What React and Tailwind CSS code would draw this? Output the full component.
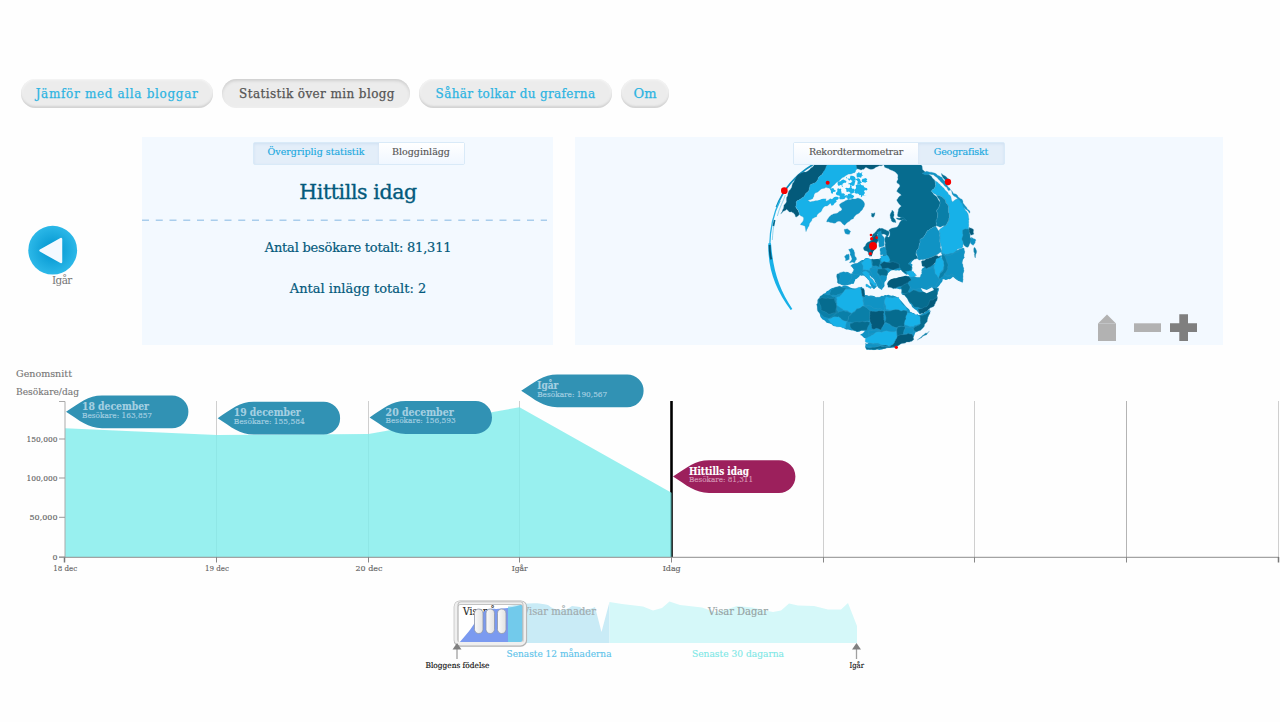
import React from "react";

const SERIF = "font-['DejaVu_Serif','Liberation_Serif',serif]";

/* ---------- navigation ---------- */

const NAV = [
  { text: "Jämför med alla bloggar", box: "w-[192px] tracking-[0.67px]", active: false },
  { text: "Statistik över min blogg", box: "w-[188px] tracking-[0.4px]", active: true },
  { text: "Såhär tolkar du graferna", box: "w-[193px] tracking-[0.34px]", active: false },
  { text: "Om", box: "w-[48px] text-[13px]", active: false },
];

function Nav() {
  return (
    <nav className="flex gap-[9px] pt-[79px] pl-[21px]">
      {NAV.map((n) => (
        <button
          key={n.text}
          className={
            "flex h-[29px] items-center justify-center rounded-full bg-[#ececec] text-[12px] whitespace-nowrap [-webkit-text-stroke:0.25px] " +
            n.box +
            (n.active
              ? " pl-[2px] text-[#555] shadow-[inset_0_2px_3px_#cfcfcf,inset_0_0_2px_#f8f8f8]"
              : " text-[#2db4e2] shadow-[inset_0_-2px_2px_#d2d2d2,inset_0_0_2px_1px_#f6f6f6]")
          }
        >
          {n.text}
        </button>
      ))}
    </nav>
  );
}

function Tabs({ items }) {
  return (
    <div className="relative z-10 flex h-[23px] w-[212px] rounded-[2px] border border-[#d9eaf8] bg-[#f6faff] text-[9.5px] [-webkit-text-stroke:0.15px]">
      {items.map((t) => (
        <div
          key={t.text}
          className={
            "flex items-center justify-center pb-[3px] whitespace-nowrap " +
            t.box +
            (t.active
              ? " bg-[#e3eef9] text-[#18a8df] shadow-[inset_0_1px_3px_#cfe0f2]"
              : " bg-linear-to-b from-white to-[#f0f7ff] text-[#555]")
          }
        >
          {t.text}
        </div>
      ))}
    </div>
  );
}

/* ---------- globe ---------- */

function noise(a, b) {
  const s = Math.sin(a * 12.9898 + b * 78.233) * 43758.5453;
  return s - Math.floor(s) - 0.5;
}

/* Splits every edge and pushes the midpoints sideways, so borders look drawn by hand. */
function roughen(points, depth, amount) {
  let pts = points;
  for (let d = 0; d < depth; d++) {
    const next = [];
    pts.forEach((p, i) => {
      const q = pts[(i + 1) % pts.length];
      next.push(p);
      const k = noise(p[0] + q[0], p[1] + q[1]) * amount;
      const len = Math.hypot(q[0] - p[0], q[1] - p[1]);
      if (len < 6) return;
      const s = p[0] + p[1] * 2 < q[0] + q[1] * 2 ? 1 : -1;
      const dx = (q[0] - p[0]) * s;
      const dy = (q[1] - p[1]) * s;
      next.push([(p[0] + q[0]) / 2 - dy * k, (p[1] + q[1]) / 2 + dx * k]);
    });
    pts = next;
  }
  return pts.map((p) => p[0].toFixed(1) + "," + p[1].toFixed(1)).join(" ");
}

const parse = (s) => s.split(" ").map((p) => p.split(",").map(Number));

const D = "#045a7a";
const T = "#066c8f";
const M = "#0a7fa8";
const B = "#1093c4";
const L = "#17b1e8";
const W = "#f3f9ff";

const LAND = [
  [B, "172,532 180,505 215,475 250,468 305,470 315,495 360,505 375,495 412,502 425,510 450,545 475,555 510,538 505,560 470,600 460,622 410,650 350,658 318,658 315,648 335,635 300,615 315,602 270,600 225,588 200,578 180,555"],
  [B, "272,406 290,402 302,392 318,384 336,388 360,385 376,366 420,366 460,390 455,430 440,434 425,420 400,420 384,430 380,448 374,456 366,480 356,474 340,446 328,436 344,462 350,470 342,478 330,462 316,440 300,436 286,448 280,462 262,466 240,462 236,434 262,426 280,432 282,420"],
  [B, "380,462 392,448 445,438 486,442 486,416 550,376 608,356 608,456 580,440 548,448 530,474 536,476 528,504 500,545 478,552 454,524 424,492 430,478 398,474"],
  [D, "165,100 210,100 185,135 150,165 132,200 110,213 107,230 118,252 108,262 100,248 88,246 80,238 62,252 70,236 78,218 80,202 84,190 98,160 125,128"],
  [L, "205,100 288,100 292,116 284,128 266,132 250,142 238,152 228,158 222,165 213,176 198,172 180,180 163,192 158,206 143,212 150,216 172,212 186,203 195,200 198,214 212,206 224,212 208,222 192,230 182,246 170,260 156,266 150,278 144,292 138,305 135,288 121,284 131,264 118,254 107,230 110,213 132,200 150,165 185,135"],
  [W, "176,192 190,182 198,176 206,182 204,192 215,198 202,204 190,206 170,210 160,202"],
  [D, "286,100 375,100 352,110 335,118 318,112 304,120 291,116"],
  [L, "233,157 246,150 258,158 250,172 236,168", 0.9],
  [L, "258,140 280,138 287,146 268,152", 0.9],
  [L, "264,156 280,152 284,162 270,166", 0.9],
  [L, "290,130 308,126 314,138 296,142", 0.9],
  [L, "255,175 270,166 282,176 290,186 278,190 262,186", 0.9],
  [L, "284,152 300,148 306,158 292,164", 0.9],
  [L, "288,170 306,166 320,174 312,184 320,196 306,202 296,192 284,184", 0.9],
  [L, "232,176 244,178 250,190 262,196 254,206 240,198 228,188", 0.9],
  [L, "210,180 222,176 226,186 216,192", 0.9],
  [L, "308,146 322,148 316,158 306,156", 0.9],
  [L, "264,192 280,196 274,206 262,204", 0.9],
  [L, "222,202 236,206 226,218 212,222", 0.9],
  [B, "200,276 208,260 220,252 236,246 246,238 238,224 256,212 278,206 294,204 306,210 314,222 308,238 288,254 280,266 264,276 254,286 240,274 222,280"],
  [B, "253,298 262,296 272,304 268,313 255,310"],
  [T, "372,100 482,100 488,120 510,136 524,150 527,168 514,184 530,200 540,216 530,240 532,262 528,290 502,302 480,328 478,345 468,368 474,386 454,392 444,402 456,412 450,424 436,430 420,414 402,408 390,395 374,388 370,364 376,340 378,318 386,322 390,308 386,300 412,290 420,276 430,268 414,260 416,236 424,228 410,210 424,196 410,184 420,168 410,156 414,138 406,126 388,118 374,112"],
  [T, "396,240 390,256 394,272 408,278 400,262 402,246"],
  [T, "408,264 428,262 440,272 420,270"],
  [T, "334,250 345,248 340,262 334,258"],
  [B, "486,130 500,124 520,128 546,142 560,158 572,180 566,182 552,166 540,152 520,134 500,134"],
  [T, "545,130 560,142 568,152 558,152 548,142"],
  [L, "526,152 548,172 562,186 578,216 592,206 606,212 612,232 622,248 626,280 628,300 618,330 608,352 580,370 545,372 541,340 536,302 556,288 568,262 566,230 552,206 530,196 514,184 527,168"],
  [M, "530,196 552,206 566,230 568,262 556,288 540,292 528,286 532,262 530,240 540,216"],
  [B, "478,345 480,328 502,302 528,290 536,302 541,340 545,366 526,376 500,386 476,390 468,368"],
  [B, "548,378 580,370 608,355 614,365 606,400 609,430 608,456 592,448 580,440 560,438 548,424 556,404"],
  [M, "608,300 626,296 630,318 634,332 624,352 614,348 606,330"],
  [D, "628,292 640,298 642,312 632,316"],
  [B, "634,322 648,330 640,346 632,340"],
  [M, "643,352 650,364 646,384 644,370"],
  [B, "572,180 592,196 606,208 616,228 630,244 628,250 610,230 600,212"],
  [B, "545,366 560,376 580,370 612,354 614,365 606,400 609,430 607,458 590,448 574,432 560,438 548,424"],
  [D, "484,394 500,386 526,376 546,378 534,392 520,404 500,416 486,408"],
  [M, "546,374 556,380 564,402 562,420 548,440 534,446 548,424 550,400"],
  [L, "528,388 544,376 551,394 548,420 536,444 524,432 522,408"],
  [B, "444,440 462,438 480,442 486,424 502,416 520,410 526,432 540,450 528,472 514,468 498,478 476,476 456,478 444,462"],
  [D, "382,462 392,448 410,444 424,438 446,440 454,450 442,462 426,468 400,476 384,472"],
  [T, "422,470 442,458 450,470 444,484 456,494 440,492 424,488"],
  [L, "436,424 462,426 470,436 450,440"],
  [T, "426,492 446,488 460,480 482,486 500,484 512,476 536,474 530,504 514,524 500,538 474,532 462,532 446,514"],
  [D, "474,536 500,530 510,510 532,500 520,530 500,544 480,552"],
  [T, "310,354 318,342 330,334 336,320 346,306 358,294 372,298 388,306 382,320 372,312 352,312 342,330 338,356 330,380 324,366 314,362"],
  [D, "338,322 350,312 356,330 348,352 338,380 328,376 332,350"],
  [B, "353,306 364,302 374,328 372,348 358,352 354,330"],
  [B, "360,356 374,350 380,374 362,376"],
  [B, "266,358 276,354 284,368 290,388 284,398 268,398 276,386 270,374"],
  [B, "254,378 266,372 268,388 256,392"],
  [B, "240,428 262,426 276,436 268,456 254,466 236,462 232,444"],
  [M, "231,432 239,428 238,460 232,458"],
  [B, "272,408 290,400 306,396 312,412 302,428 306,434 290,434 276,430 282,418"],
  [L, "304,398 318,386 332,388 336,408 328,422 310,420"],
  [T, "334,388 352,384 362,394 358,412 338,408"],
  [L, "362,378 380,374 390,390 378,402 362,394"],
  [D, "360,404 372,394 394,396 418,402 420,414 400,420 384,414 366,418"],
  [T, "352,418 372,416 384,424 380,438 360,438 350,428"],
  [L, "306,428 318,422 328,430 332,444 348,460 350,470 340,466 326,450 314,438"],
  [B, "330,414 350,412 352,430 360,444 368,460 364,478 354,466 342,444 334,430"],
  [L, "318,462 338,470 332,476 318,470"],
  [M, "212,482 240,468 258,474 256,490 230,496 210,498"],
  [M, "174,508 190,492 226,500 230,526 236,552 208,566 190,560 172,540"],
  [T, "176,508 186,502 222,504 230,526 228,548 204,552 182,540"],
  [L, "230,502 256,478 302,472 306,496 312,528 276,550 250,540 230,526"],
  [D, "302,474 312,476 316,502 306,498"],
  [B, "310,508 318,496 346,504 364,498 378,506 376,542 344,536 312,526"],
  [L, "378,500 416,502 424,518 442,540 400,542 378,538"],
  [M, "228,550 250,542 276,550 262,574 240,566 206,566"],
  [M, "276,550 308,528 332,542 330,572 300,580 262,574"],
  [D, "332,542 372,544 374,576 364,600 336,596 330,572"],
  [T, "374,542 440,542 446,560 432,590 400,594 374,576"],
  [L, "442,548 464,552 480,560 500,558 484,580 460,590 434,586"],
  [T, "480,556 512,542 502,574 470,606 458,598 482,580"],
  [L, "204,568 236,560 260,574 258,594 240,590 222,588"],
  [T, "270,580 300,576 330,576 322,600 296,604 274,596"],
  [B, "328,600 364,600 374,580 410,594 412,604 372,604 350,608 326,616"],
  [L, "318,624 350,606 410,602 412,620 404,640 380,650 348,640 316,636"],
  [T, "412,592 436,590 430,614 412,620"],
  [B, "436,592 462,598 456,614 432,612"],
  [D, "402,640 412,618 456,612 462,628 432,640 410,648 380,654"],
  [T, "316,652 350,650 392,652 350,658 320,658"],
  [B, "316,640 340,642 392,650 344,652 318,650"],
  [M, "472,630 486,618 508,604 500,614 484,624"],
];

const DOTS = [
  [73, 182, 10], [203, 158, 6], [564, 156, 9.5], [339, 348, 12], [333, 315, 4],
  [335, 326, 5], [350, 323, 4], [331, 371, 5], [409, 652, 5],
];

function Globe() {
  return (
    <svg className="absolute top-[-7px] left-[185px] h-[225px] w-[250px]" viewBox="0 0 750 675">
      <path d="M158 104C112 132 70 175 49 232" fill="none" stroke="#0e8fbe" strokeWidth="5" />
      <path d="M60 212C40 250 30 300 29 350" fill="none" stroke="#2bb2e2" strokeWidth="4" />
      <path d="M76 195C70 215 58 232 52 258M44 272C40 292 38 310 37 330" fill="none" stroke="#66c3e4" strokeWidth="2" />
      <path d="M44 270L40 288" stroke={T} strokeWidth="5" />
      <path d="M25 340C23 420 48 480 92 540L97 537C60 480 40 430 33 340Z" fill={L} />
      <path d="M29 345C29 362 30 376 34 388" fill="none" stroke={D} strokeWidth="6" />
      <g stroke="#3f9dc2" strokeWidth="0.9" strokeLinejoin="round">
        {LAND.map(([fill, pts, rough], i) => (
          <polygon
            key={i}
            points={roughen(parse(pts), 3, rough ?? 0.26)}
            fill={fill}
            stroke={fill === W || rough || i < 3 ? "none" : undefined}
          />
        ))}
      </g>
      <g fill={W}>
        <polygon points={roughen(parse("452,400 464,388 474,396 470,406 480,414 486,432 476,440 462,428 466,416"), 2, 0.3)} />
        <polygon points="380,440 388,426 404,424 412,430 424,426 438,436 424,440 404,444 386,450" />
        <polygon points="416,504 424,506 452,530 476,550 468,554 440,532" />
        <polygon points="482,474 500,480 516,472 522,480 500,490 488,484" />
        <polygon points="340,364 352,354 358,364 350,378 360,386 340,388 334,382" />
      </g>
      <g fill="#f50000">
        {DOTS.map(([x, y, r]) => (
          <circle key={x + "-" + y} cx={x} cy={y} r={r} />
        ))}
      </g>
    </svg>
  );
}

function MapControls() {
  return (
    <svg className="absolute top-[175px] left-[521px] h-[32px] w-[104px]" viewBox="0 0 104 32">
      <path d="M2 11.5L11 2.5L20 11.5V29H2Z" fill="#b2b2b2" />
      <path d="M2 11.5H20" stroke="#c2c4c6" strokeWidth="1" />
      <rect x="38" y="11.3" width="27" height="8.7" fill="#b2b2b2" />
      <path d="M83.3 2.3H92V11.3H101V20H92V29H83.3V20H74V11.3H83.3Z" fill="#7f7f7f" />
    </svg>
  );
}

/* ---------- charts ---------- */

function Txt({ x, y, w, size, fill, children, bold }) {
  return (
    <text
      x={x}
      y={y}
      fontSize={size}
      fill={fill}
      stroke={fill}
      strokeWidth="0.15"
      textLength={w}
      lengthAdjust="spacingAndGlyphs"
      fontWeight={bold ? 700 : 400}
    >
      {children}
    </text>
  );
}

const GRID_X = [216.5, 368.5, 519.5, 823.5, 974.5, 1126.5, 1278.5];

const FLAGS = [
  { x: 66, y: 411.8, t: "18 december", tw: 67, s: "Besökare: 163,857", sw: 70 },
  { x: 217.7, y: 418.2, t: "19 december", tw: 67, s: "Besökare: 155,584", sw: 71 },
  { x: 369.6, y: 417.5, t: "20 december", tw: 68, s: "Besökare: 156,593", sw: 70 },
  { x: 521.2, y: 390.8, t: "Igår", tw: 21, s: "Besökare: 190,567", sw: 70 },
  { x: 673, y: 476.6, t: "Hittills idag", tw: 60, s: "Besökare: 81,311", sw: 64, now: true },
];

const Y_TICKS = [
  ["150,000", 439, 31],
  ["100,000", 478, 31],
  ["50,000", 517.3, 28],
  ["0", 557, 5],
];

const X_TICKS = [
  ["18 dec", 65.3, 24],
  ["19 dec", 217, 24],
  ["20 dec", 369, 27],
  ["Igår", 519.7, 16],
  ["Idag", 671.7, 18],
];

function VisitorChart() {
  return (
    <svg className="block h-[235px] w-[1280px]" viewBox="0 345 1280 235">
      <Txt x={16} y={377} w={56} size={9.5} fill="#777">Genomsnitt</Txt>
      <Txt x={16} y={395} w={63} size={9.5} fill="#777">Besökare/dag</Txt>
      {GRID_X.map((x) => (
        <path key={x} d={`M${x} 401V557`} stroke={x === 1126.5 ? "#b4b4b4" : "#cfcfcf"} />
      ))}
      <path d="M671.5 401V557" stroke="#000" strokeWidth="2.6" />
      <path d="M65 428.3L216.5 435L368.5 434L519.5 407.3L671.5 492.8V557H65Z" fill="#7eeceb" fillOpacity="0.8" />
      <path d="M59 401.5H65V557" fill="none" stroke="#aaa" />
      <path d="M59 557.3H1279" stroke="#8c8c8c" strokeOpacity="0.8" strokeWidth="1.2" />
      <path d="M64.5 557V562.5M1278.5 557V562.5" stroke="#777" strokeWidth="1.5" />
      {[216.5, 368.5, 519.5, 671.5, 823.5, 974.5, 1126.5].map((x) => (
        <path key={x} d={`M${x} 557V562.5`} stroke="#888" />
      ))}
      {Y_TICKS.map(([t, y, w]) => (
        <g key={t}>
          <path d={`M59 ${y}H65`} stroke="#999" />
          <Txt x={57.5 - w} y={y + 3} w={w} size={8} fill="#666">{t}</Txt>
        </g>
      ))}
      {X_TICKS.map(([t, x, w]) => (
        <Txt key={t} x={x - w / 2} y={571} w={w} size={8} fill="#666">{t}</Txt>
      ))}
      {FLAGS.map((f) => (
        <g key={f.t} transform={`translate(${f.x} ${f.y})`}>
          <path
            d="M0 0C14 -9 22 -16.4 36 -16.4H106A16.4 16.4 0 0 1 106 16.4H36C22 16.4 14 9 0 0Z"
            fill={f.now ? "#9c205c" : "#3192b4"}
          />
          <Txt x={16} y={-1.8} w={f.tw} size={10.5} fill={f.now ? "#fff" : "#a5d0e2"} bold>{f.t}</Txt>
          <Txt x={16} y={5.7} w={f.sw} size={8} fill={f.now ? "#d597b6" : "#a5d0e2"}>{f.s}</Txt>
        </g>
      ))}
    </svg>
  );
}

function Timeline() {
  return (
    <svg className="block h-[95px] w-[480px]" viewBox="410 585 480 95">
      <defs>
        <linearGradient id="grip" x1="0" x2="1" y1="0" y2="0">
          <stop offset="0" stopColor="#fafafa" />
          <stop offset="1" stopColor="#e2e2e2" />
        </linearGradient>
      </defs>
      <path d="M508 606L522 604C532 603 540 603 548 605C555 611 565 612 572 606L580 607C586 612 592 608 595 607L601.5 632L609.5 602V643H508Z" fill="#c9ebf6" />
      <path d="M609.5 602L622 604L643 606.5L653 610.5L662 608L669.5 601.5L680 605L702 607.5L715 612L728 609L737 606L752 607.5L763 610L773 612L781 610.5L789 603.5L798 605.5L814 606L828 609.5L841 609.5L848 603L857 626V643H609.5Z" fill="#d5f8f9" />
      <Txt x={522} y={614.5} w={74} size={10.5} fill="#a0aaad">Visar månader</Txt>
      <Txt x={708} y={614.5} w={60} size={10.5} fill="#95a2a3">Visar Dagar</Txt>
      <path d="M457.5 602.5H508V642H457.5Z" fill="#fff" />
      <Txt x={463} y={614.5} w={37} size={10.5} fill="#222">Visar år</Txt>
      <path d="M459 643C468 633 474 625 479 616C484 610 490 608 496 609L508 608V643Z" fill="#7b9af0" />
      <path d="M508 607.5C514 607 518 606 523 604V643H508Z" fill="#72caeb" />
      <rect x="456" y="602.8" width="68.8" height="41.6" rx="4" fill="none" stroke="#b3b3b3" strokeWidth="4.6" />
      <rect x="456" y="602.6" width="68.4" height="41.2" rx="4" fill="none" stroke="#efefef" strokeWidth="3.4" />
      <path d="M458 641.5V604.5Q458 601.8 461 601.8H520.5Q523 601.8 523 604.5V641.5" fill="none" stroke="#aaa" strokeWidth="0.7" />
      {[474.5, 486, 497.5].map((x) => (
        <rect key={x} x={x} y="609" width="8.5" height="24.5" rx="4.2" fill="url(#grip)" stroke="#8d95a8" strokeWidth="0.8" />
      ))}
      <Txt x={506.5} y={657} w={105} size={10} fill="#5cc3ea">Senaste 12 månaderna</Txt>
      <Txt x={692} y={657} w={92} size={10} fill="#7de8e6">Senaste 30 dagarna</Txt>
      {[457, 856.5].map((x) => (
        <g key={x}>
          <path d={`M${x} 648V659`} stroke="#a0a0a0" strokeWidth="1.3" />
          <path d={`M${x - 4.5} 649.5L${x} 643L${x + 4.5} 649.5Z`} fill="#808080" />
        </g>
      ))}
      <Txt x={425.5} y={667.5} w={64} size={7.8} fill="#111">Bloggens födelse</Txt>
      <Txt x={849.5} y={667.5} w={14.5} size={7.8} fill="#111">Igår</Txt>
    </svg>
  );
}

/* ---------- page ---------- */

export default function App() {
  return (
    <div className={"flex h-[722px] w-[1280px] flex-col overflow-hidden bg-[#fefefe] " + SERIF}>
      <Nav />
      <main className="mt-[29px] flex h-[208px]">
        <div className="w-[142px] pt-[88px] pl-[28px]">
          <svg className="block h-[50px] w-[50px]" viewBox="0 0 50 50">
            <defs>
              <radialGradient id="disc">
                <stop offset="0.3" stopColor="#0c9ed6" />
                <stop offset="1" stopColor="#2cb8e8" />
              </radialGradient>
            </defs>
            <circle cx="24.7" cy="25.2" r="24.4" fill="url(#disc)" />
            <path d="M12.5 25.5L33 14V37Z" fill="#f4f9ff" stroke="#f4f9ff" strokeWidth="2.5" strokeLinejoin="round" />
          </svg>
          <div className="pl-[24px] text-[10.5px] leading-[11px] tracking-[-0.6px] text-[#777]">Igår</div>
        </div>
        <section className="flex w-[411px] flex-col items-center bg-[#f3f9ff] pt-[5px] text-[#035a7c]">
          <div className="flex w-full justify-center pl-[22px]">
            <Tabs
              items={[
                { text: "Övergriplig statistik", box: "w-[125px]", active: true },
                { text: "Blogginlägg", box: "w-[85px]", active: false },
              ]}
            />
          </div>
          <h1 className="mt-[12px] h-[30px] pl-[21px] text-[20.5px] leading-[30px] tracking-[-0.4px] [-webkit-text-stroke:0.35px]">Hittills idag</h1>
          <svg className="mt-[12px] block h-[3px] w-[411px]" viewBox="0 0 411 3">
            <path d="M0 1.3H405" stroke="#a9cdec" strokeWidth="1.4" strokeDasharray="7 6.75" />
          </svg>
          <p className="mt-[16px] pl-[21px] text-[13px] leading-5 tracking-[-0.21px] [-webkit-text-stroke:0.2px]">Antal besökare totalt: 81,311</p>
          <p className="mt-[21px] pl-[21px] text-[13px] leading-5 [-webkit-text-stroke:0.2px]">Antal inlägg totalt: 2</p>
        </section>
        <section className="relative ml-[22px] flex w-[648px] flex-col items-center bg-[#f3f9ff] pt-[5px]">
          <Tabs
            items={[
              { text: "Rekordtermometrar", box: "w-[124px] tracking-[-0.15px]", active: false },
              { text: "Geografiskt", box: "w-[86px] tracking-[-0.15px]", active: true },
            ]}
          />
          <Globe />
          <MapControls />
        </section>
      </main>
      <VisitorChart />
      <div className="mt-[5px] pl-[410px]">
        <Timeline />
      </div>
    </div>
  );
}
